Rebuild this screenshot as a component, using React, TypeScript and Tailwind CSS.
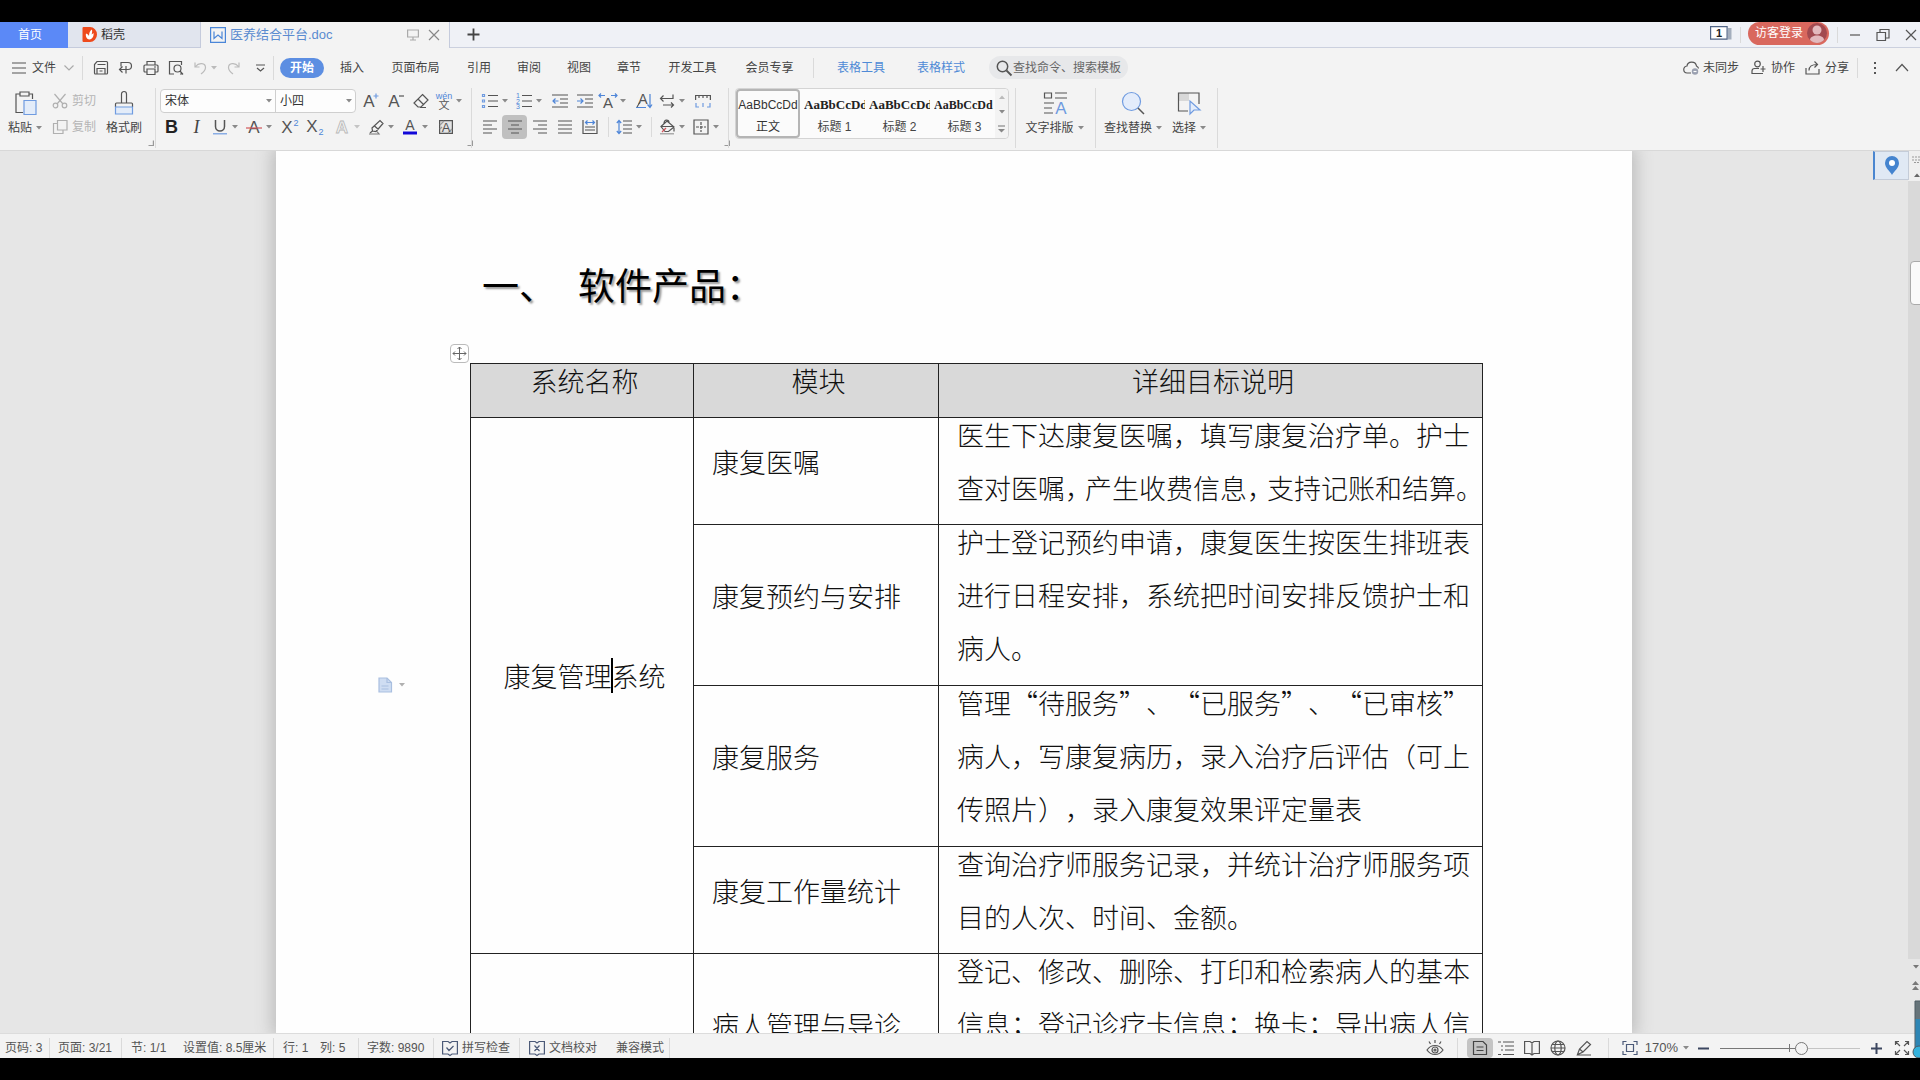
import type { ReactNode } from 'react';

const UI = "font-['Liberation_Sans','Noto_Sans_CJK_SC',sans-serif]";
const CJK = "font-['Noto_Sans_CJK_SC',sans-serif]";

const DARK = '#555';
const BLUE = '#6f9be0';

function Icon({ w = 16, h = 16, color = DARK, className = '', children }: { w?: number; h?: number; color?: string; className?: string; children: ReactNode }) {
  return (
    <svg width={w} height={h} viewBox={`0 0 ${w} ${h}`} fill="none" stroke={color} strokeWidth={1.2} className={`shrink-0 overflow-visible ${className}`} aria-hidden="true">
      {children}
    </svg>
  );
}

function Caret({ color = '#8a8a8a' }: { color?: string }) {
  return (
    <svg width="6" height="4" viewBox="0 0 6 4" className="shrink-0" aria-hidden="true">
      <path d="M0 0h6L3 3.6z" fill={color} />
    </svg>
  );
}

function VLine({ className }: { className: string }) {
  return <span className={`w-px shrink-0 bg-[#dadada] ${className}`} />;
}

function Tool({ label, active = false, children }: { label: string; active?: boolean; children: ReactNode }) {
  return (
    <button aria-label={label} className={`flex h-6 w-[25px] shrink-0 items-center justify-center rounded-sm ${active ? 'bg-[#c0c0c0]' : ''}`}>
      {children}
    </button>
  );
}

function DropTool({ label, caret, children }: { label: string; caret?: string; children: ReactNode }) {
  return (
    <button aria-label={label} className="flex h-6 w-[34px] shrink-0 items-center gap-1 pl-[3px]">
      {children}
      <Caret color={caret} />
    </button>
  );
}

function Launcher() {
  return (
    <button aria-label="更多设置" className="self-end pb-1 pr-1.5">
      <Icon w={6} h={6} color="#999"><path d="M5.4 0.5v5H0.5" /></Icon>
    </button>
  );
}

function Letter({ x = 8, y = 13, size = 15, fill = DARK, stroke = 'none', weight = 400, t = 'A' }: { x?: number; y?: number; size?: number; fill?: string; stroke?: string; weight?: number; t?: string }) {
  return (
    <text x={x} y={y} fontSize={size} fill={fill} stroke={stroke} strokeWidth={stroke === 'none' ? 0 : 0.8} fontWeight={weight} textAnchor="middle" className={UI}>
      {t}
    </text>
  );
}

function TitleBar() {
  return (
    <header className="flex h-[26px] shrink-0 text-xs">
      <button className="w-[68px] bg-[#5b89f7] pr-2 text-white">首页</button>
      <button className="flex w-[133px] items-center gap-1 border-b border-r border-[#c5cbdc] bg-[#e1e5ee] pl-3.5 text-[#333]">
        <Icon w={15} h={15} color="none">
          <path d="M1.5 0H8a7 7.5 0 0 1 0 15H1.500a1 1 0 0 1-1-1V1a1 1 0 0 1 1-1z" fill="#ee4a1c" />
          <path d="M7.500 12.500C4 12 3.500 8.500 4 6.500c1.500.5 2.500 1.500 3 2.500C7 6 8 3.500 10 2.500c.2 2 .3 3-.5 5 1-.5 1.500-1 2-1.500.5 3-1 6-4 6.500z" fill="#fff" />
        </Icon>
        稻壳
      </button>
      <div className="flex w-[249px] items-center border-r border-[#c5cbdc] bg-[#f3f3f3] pl-[9px] pr-[9px] text-[#5a8bd0]">
        <Icon color="#4a86d8">
          <path d="M.6.6h14.800v14.800H.6z" />
          <path d="M4 4.500v7l4-3.500 4 3.500v-7" />
        </Icon>
        <span className="ml-1 text-[13px]">医养结合平台.doc</span>
        <Icon w={12} h={12} color="#aaa" className="ml-auto"><path d="M.6 1h10.800v7H.6zM3 11h6M6 8v3" /></Icon>
        <button aria-label="关闭标签" className="ml-[9px]"><Icon w={12} h={12} color="#888"><path d="M1 1l10 10M11 1L1 11" /></Icon></button>
      </div>
      <div className="flex flex-1 items-center border-b border-[#cbd0de] bg-[#eff1f6] pl-[17px] pr-[3px]">
        <button aria-label="新建标签"><Icon w={13} h={13} color="#444" ><path d="M6.500 0.500v12M.5 6.500h12" strokeWidth={1.800} /></Icon></button>
        <button aria-label="窗口列表" className="mb-1 ml-auto">
          <Icon w={22} h={14} color="#4f6384">
            <path d="M18 2h3.500v11.500H18z" fill="#a4aebd" stroke="none" />
            <path d="M.6.6h16.500v12.600H.6z" fill="#fff" />
            <Letter x={9} y={11} size={11} fill="#222" weight={700} t="1" />
          </Icon>
        </button>
        <VLine className="ml-2 h-4" />
        <button className="mb-[3px] ml-[7px] flex h-[23px] items-center gap-1 rounded-full bg-[#d9685e] pl-[7px] pr-0.5 text-white">
          访客登录
          <Icon w={20} h={20} color="none">
            <circle cx="10" cy="10" r="10" fill="#a24a50" />
            <circle cx="10" cy="7" r="4.500" fill="#e3b9bd" />
            <path d="M3 17c0-6 14-6 14 0-4 4-10 4-14 0z" fill="#e3b9bd" />
          </Icon>
        </button>
        <VLine className="ml-2 h-4" />
        <button aria-label="最小化" className="ml-[11px]"><Icon w={12} h={12}><path d="M1 6h10" /></Icon></button>
        <button aria-label="还原" className="ml-[15px]"><Icon w={14} h={12} color="#555"><path d="M1 3.500h8.500v8H1zM4 3.500v-3h9V9H9.500" /></Icon></button>
        <button aria-label="关闭" className="ml-[15px]"><Icon w={12} h={12}><path d="M1 1l10 10M11 1L1 11" /></Icon></button>
      </div>
    </header>
  );
}

const TABS = [
  { name: '插入', cls: 'w-[50px]' },
  { name: '页面布局', cls: 'w-[77px]' },
  { name: '引用', cls: 'w-[50px]' },
  { name: '审阅', cls: 'w-[50px]' },
  { name: '视图', cls: 'w-[50px]' },
  { name: '章节', cls: 'w-[50px]' },
  { name: '开发工具', cls: 'w-[77px]' },
  { name: '会员专享', cls: 'w-[77px]' },
];

function MenuBar() {
  return (
    <nav className="flex h-[38px] shrink-0 items-center pl-3 pr-[11px] pt-px text-xs text-[#444]">
      <button className="flex items-center">
        <Icon w={14} h={12}><path d="M0 1h14M0 6h14M0 11h14" /></Icon>
        <span className="ml-1.5">文件</span>
        <Icon w={10} h={6} color="#aaa" className="ml-2"><path d="M.5.5L5 5 9.500.5" /></Icon>
      </button>
      <VLine className="ml-2 h-6" />
      <div className="ml-2.5 flex items-center gap-[9px]">
        <button aria-label="保存"><Icon><path d="M1.500 13V4.500l2.500-3h9.500a1 1 0 0 1 1 1V13a1 1 0 0 1-1 1h-11a1 1 0 0 1-1-1zM4 14V8.500h8V14M4.500 4.500h8M6.500 11h3" /></Icon></button>
        <button aria-label="输出为PDF"><Icon><path d="M3 6.500V2.500h7a3.500 3.500 0 0 1 0 7H1.500M4.500 6.500l-3 3 3 3M8 13.500V6" /></Icon></button>
        <button aria-label="打印"><Icon><path d="M4 5V1.500h8V5M4 12H2a1 1 0 0 1-1-1V6a1 1 0 0 1 1-1h12a1 1 0 0 1 1 1v5a1 1 0 0 1-1 1h-2M4 9h8v5.500H4zM11 7h2" /></Icon></button>
        <button aria-label="打印预览"><Icon><path d="M6 14H1.500V1.500h12V5" /><circle cx="9.500" cy="8.500" r="3.500" /><path d="M12 11l3 3.500M12 14h3" /></Icon></button>
      </div>
      <button aria-label="撤销" className="ml-2.5 flex items-center gap-1">
        <Icon w={13} h={14} color="#bbb"><path d="M1 1.500V6h4.500M1.500 5.500C5 1 11.500 2 11.500 6.500c0 3-2.500 5-4.500 6.500" /></Icon>
        <Caret color="#bbb" />
      </button>
      <button aria-label="恢复" className="ml-2.5"><Icon w={13} h={14} color="#bbb"><path d="M12 1.500V6H7.500M11.500 5.500C8 1 1.500 2 1.500 6.500c0 3 2.500 5 4.500 6.500" /></Icon></button>
      <button aria-label="自定义快速访问" className="ml-4"><Icon w={9} h={8}><path d="M0 1h9M1 4l3.500 3L8 4" /></Icon></button>
      <VLine className="ml-2 h-6" />
      <button className="ml-[6px] h-5 w-11 rounded-full bg-[#5c8ee2] font-bold text-white">开始</button>
      <div className="ml-[3px] flex">
        {TABS.map((t) => (
          <button key={t.name} className={t.cls}>{t.name}</button>
        ))}
      </div>
      <VLine className="ml-[5px] h-5" />
      <div className="ml-[7px] flex text-[#4f8ad6]">
        <button className="w-20">表格工具</button>
        <button className="w-20">表格样式</button>
      </div>
      <label className="ml-2 flex h-[23px] w-[139px] items-center rounded-full bg-[#e7e8ea] pl-[7px]">
        <Icon><circle cx="6.500" cy="6.500" r="5.200" strokeWidth={1.500} /><path d="M10.500 10.500l5 5" strokeWidth={1.800} /></Icon>
        <input aria-label="搜索" placeholder="查找命令、搜索模板" className="ml-px w-28 bg-transparent outline-none [text-spacing-trim:space-all] placeholder:text-[#666]" />
      </label>
      <div className="ml-auto flex items-center">
        <button className="flex items-center gap-1"><Icon><path d="M8 13H4.500a3.500 3.500 0 0 1-.5-7c.5-5 8.500-5.500 9.500 0 1.500.8 2 1.500 2 2.500" /><circle cx="12" cy="11.500" r="3.200" fill="#9aa0b0" stroke="none" /><path d="M10.500 11.500h3" stroke="#fff" /></Icon>未同步</button>
        <button className="ml-3 flex items-center gap-[5px]"><Icon w={15} h={15}><circle cx="6.500" cy="4" r="2.800" /><path d="M8 8.500H3.500c-1.500 0-2.500 1-2.500 2.500v2.500h11M12 6v6M9.500 9h5" /></Icon>协作</button>
        <button className="ml-2.5 flex items-center gap-1"><Icon><path d="M1 8v6h13V9M4 10.500C4 6.500 7 4.500 12 4.500M9.500 1.500l3 3-3 3" /></Icon>分享</button>
        <VLine className="ml-2 h-5" />
        <button aria-label="更多" className="ml-[15px]"><Icon w={4} h={14} color="none"><g fill="#555"><path d="M1 1h2v2H1zM1 6h2v2H1zM1 11h2v2H1z" /></g></Icon></button>
        <button aria-label="折叠功能区" className="ml-[18px]"><Icon w={14} h={9}><path d="M1 8l6-6.500L13 8" /></Icon></button>
      </div>
    </nav>
  );
}

const STYLES = [
  { name: '标题 1', cls: 'text-[13px]' },
  { name: '标题 2', cls: 'text-[13px]' },
  { name: '标题 3', cls: 'text-xs' },
];

function Ribbon() {
  return (
    <section className="flex h-[65px] shrink-0 border-b border-[#d8d8d8] text-xs text-[#444]">
      {/* clipboard */}
      <div className="flex w-[154px] pt-[5px]">
        <button className="flex w-[42px] flex-col items-center pl-2">
          <Icon w={23} h={24}>
            <path d="M6 3H2v18.500h7M15 3h3.500v5M6 1h9v4H6z" />
            <path d="M10 9.500h12v14H10z" fill="#e3ecf9" stroke={BLUE} />
          </Icon>
          <span className="mt-[5px] flex items-center gap-1">粘贴<Caret /></span>
        </button>
        <div className="ml-2.5 flex flex-col gap-0.5 text-[#b5b5b5]">
          <button className="-mt-0.5 flex h-6 items-center gap-1"><Icon color="#b0b0b0"><circle cx="3.500" cy="12.500" r="2.300" /><circle cx="12.500" cy="12.500" r="2.300" /><path d="M2.500 1l8.500 10M13.500 1L5 11" /></Icon>剪切</button>
          <button className="flex h-6 items-center gap-1"><Icon color="#b0b0b0"><path d="M5.500 1.500h9.500v9.500H5.500zM5 4.500H1.500v10H11V11.500" /></Icon>复制</button>
        </div>
        <button className="ml-2.5 flex flex-col items-center">
          <Icon w={20} h={24}>
            <path d="M7.500 12V3a2.500 2.500 0 0 1 5 0v9M1.500 16v-3c0-.6.4-1 1-1h15c.6 0 1 .4 1 1v3" />
            <path d="M1.500 16h17v7h-17z" fill="#e3ecf9" stroke={BLUE} />
          </Icon>
          <span className="mt-[5px] whitespace-nowrap">格式刷</span>
        </button>
        <div className="ml-auto flex"><button aria-label="剪贴板设置" className="self-end pb-1"><Icon w={6} h={6} color="#999"><path d="M5.4 0.5v5H0.5" /></Icon></button></div>
      </div>
      <VLine className="my-0.5 ml-px" />

      {/* font */}
      <div className="flex w-[315px]">
        <div className="flex shrink-0 flex-col gap-0.5 pl-[3px] pt-[3px]">
          <div className="flex items-center">
            <div className="ml-px flex h-6 rounded border border-[#cfcfcf] bg-[#fdfdfd] text-[#333]">
              <div className="flex w-[115px] items-center border-r border-[#cfcfcf] pr-[3px]">
                <select aria-label="字体" className="w-full appearance-none bg-transparent pl-1 outline-none"><option>宋体</option></select>
                <Caret />
              </div>
              <div className="flex w-[79px] items-center pr-[3px]">
                <select aria-label="字号" className="w-full appearance-none bg-transparent pl-1 outline-none"><option>小四</option></select>
                <Caret />
              </div>
            </div>
            <div className="ml-0.5 flex">
              <Tool label="增大字号"><Icon><Letter x={6} y={14} size={17} /><path d="M10.500 3h5M13 .5v5" stroke={BLUE} /></Icon></Tool>
              <Tool label="减小字号"><Icon><Letter x={6} y={14} size={17} /><path d="M11 3h5" /></Icon></Tool>
              <Tool label="清除格式"><Icon><path d="M9.500 1.500l5.500 5.500-7 7H5L1 10zM5 6l6 6M7 14.500h6" /></Icon></Tool>
              <DropTool label="拼音指南">
                <Icon><Letter y={6} size={9} fill="#4f86d8" t="wén" /><Letter y={16} size={11} t="文" /></Icon>
              </DropTool>
            </div>
          </div>
          <div className="flex">
            <Tool label="加粗"><span className="text-lg font-bold leading-6 text-[#222]">B</span></Tool>
            <Tool label="倾斜"><span className="font-['Liberation_Serif',serif] text-lg italic leading-6">I</span></Tool>
            <DropTool label="下划线"><Icon><path d="M3.500 1v6.500a4.500 4.500 0 0 0 9 0V1" strokeWidth={1.500} /><path d="M1 14.800h14" stroke={BLUE} /></Icon></DropTool>
            <DropTool label="删除线"><Icon><Letter y={14} size={17} /><path d="M0 9h16" stroke="#d0565c" /></Icon></DropTool>
            <Tool label="上标"><Icon w={18}><Letter x={6} y={14} size={17} t="X" /><Letter x={15} y={7} size={9} fill="#4f86d8" t="2" /></Icon></Tool>
            <Tool label="下标"><Icon w={18}><Letter x={6} y={13} size={17} t="X" /><Letter x={15} y={16} size={9} fill="#4f86d8" t="2" /></Icon></Tool>
            <div className="ml-1 flex">
              <DropTool label="文字效果" caret="#c4c4c4"><Icon><Letter y={14} size={17} fill="#f3f3f3" stroke="#b8b8b8" weight={700} /></Icon></DropTool>
              <DropTool label="突出显示"><Icon><path d="M4 9L12 1.500l3 3L8 12.500 4.500 12zM4 9l.5 3L2 14M6.500 7l4 3.500" /><path d="M1 15h10l-2-2.500" stroke="#777" /></Icon></DropTool>
              <DropTool label="字体颜色"><Icon><Letter y={11} size={14} /><path d="M1 14h14" stroke="#1208d8" strokeWidth={3} /></Icon></DropTool>
              <Tool label="字符底纹"><Icon w={14} h={14}><path d="M.6.6h12.800v12.800H.6z" fill="#e4e4e4" /><path d="M1 5l4-4M9 13l4-4M1 9l2-2" stroke="#999" /><Letter x={7} y={12} size={13} /></Icon></Tool>
            </div>
          </div>
        </div>
        <div className="ml-auto flex"><Launcher /></div>
      </div>
      <VLine className="my-0.5" />

      {/* paragraph */}
      <div className="flex w-64">
        <div className="flex shrink-0 flex-col gap-0.5 pl-[5px] pt-[3px]">
          <div className="flex pl-0.5">
            <DropTool label="项目符号"><Icon><path d="M6 2.500h10M6 8h10M6 13.500h10" /><path d="M.5 1.500h2v2h-2zM.5 7h2v2h-2zM.5 12.500h2v2h-2z" stroke={BLUE} /></Icon></DropTool>
            <DropTool label="编号"><Icon><path d="M6 2.500h10M6 8h10M6 13.500h10" /><Letter x={2} y={5} size={7} fill="#4f86d8" t="1" /><Letter x={2} y={11} size={7} fill="#4f86d8" t="2" /><Letter x={2} y={16} size={7} fill="#4f86d8" t="3" /></Icon></DropTool>
            <Tool label="减少缩进"><Icon><path d="M0 2h16M8 6h8M8 10h8M0 14h16" /><path d="M6.500 8H1M3.500 5.500L1 8l2.500 2.500" stroke="#4f86d8" /></Icon></Tool>
            <Tool label="增加缩进"><Icon><path d="M0 2h16M8 6h8M8 10h8M0 14h16" /><path d="M0 8h6M3.500 5.500L6 8l-2.500 2.500" stroke="#4f86d8" /></Icon></Tool>
            <DropTool label="中文版式"><Icon><Letter y={15} size={15} /><path d="M5 2.500H-1M1 .5l-2 2 2 2M11 2.500h6M15 .5l2 2-2 2" stroke="#4f86d8" /></Icon></DropTool>
            <Tool label="排序"><Icon><Letter x={7} y={11} size={14} /><path d="M0 14.500h10M14 1v13M11.500 11.500L14 14.500l2-3" stroke="#4f86d8" /><path d="M1 14l3-5" /></Icon></Tool>
            <DropTool label="换行"><Icon><path d="M14 1.500v4H1.500M4.500 2.500l-3 3 3 3M4 12h10.500M12 9.500l2.500 2.500L12 14.500" /></Icon></DropTool>
            <Tool label="制表位"><Icon><path d="M.6 7V2.500h14.800V7M4 2.500V5M8 2.500V5M12 2.500V5" /><path d="M1 10v4h3M8 10v4M12 14h3v-4" stroke={BLUE} /></Icon></Tool>
          </div>
          <div className="flex items-center">
            <Tool label="左对齐"><Icon><path d="M1 2h14M1 6h9M1 10h14M1 14h9" /></Icon></Tool>
            <Tool label="居中对齐" active><Icon><path d="M1 2h14M4 6h8M1 10h14M4 14h8" /></Icon></Tool>
            <Tool label="右对齐"><Icon><path d="M1 2h14M6 6h9M1 10h14M6 14h9" /></Icon></Tool>
            <Tool label="两端对齐"><Icon><path d="M1 2h14M1 6h14M1 10h14M1 14h14" /></Icon></Tool>
            <Tool label="分散对齐"><Icon><path d="M1 1v14M15 1v14M3 8h10M3 11h10M1 14.500h14" /><path d="M3.500 3.500h9M5.500 1.500l-2 2 2 2M10.500 1.500l2 2-2 2" stroke="#4f86d8" /></Icon></Tool>
            <VLine className="ml-1.5 h-5" />
            <div className="ml-1 flex">
              <DropTool label="行距"><Icon><path d="M7 2h9M7 6h9M7 10h9M7 14h9" /><path d="M3 1.500v13M.8 4L3 1.500 5.200 4M.8 12L3 14.500 5.200 12" stroke="#4f86d8" /></Icon></DropTool>
            </div>
            <VLine className="ml-1 h-5" />
            <div className="ml-1 flex">
              <DropTool label="底纹颜色"><Icon><path d="M2 7.500L8 2l7 6-5.500 4.500H6zM5 4.500C5 0 10 0 10 3.500M2 7.500h12M15 9v3.500" /><path d="M1 14.800h14" stroke="#999" /><path d="M3 13l4-4" stroke="#d0565c" /></Icon></DropTool>
              <DropTool label="边框"><Icon><path d="M1 1h14v14H1z" /><path d="M8 3v10M3 8h10" strokeDasharray="3 1" /></Icon></DropTool>
            </div>
          </div>
        </div>
        <div className="ml-auto flex"><Launcher /></div>
      </div>
      <VLine className="my-0.5" />

      {/* style gallery */}
      <div className="ml-[6px] mt-0.5 flex h-[51px] w-[274px] rounded border border-[#d4d4d4] bg-[#fbfbfb]">
        <button className="flex w-16 flex-col items-center rounded border-2 border-[#b5b5b5] text-[#333]">
          <span className="mt-1.5 leading-4">AaBbCcDd</span>
          <span className="mt-[6px] leading-4 text-[#333]">正文</span>
        </button>
        {STYLES.map((s) => (
          <button key={s.name} className="ml-[4px] flex w-[61px] flex-col items-center">
            <span className={`mt-2 w-full overflow-hidden whitespace-nowrap text-left font-['Liberation_Serif',serif] font-bold leading-4 text-[#222] ${s.cls}`}>AaBbCcDd</span>
            <span className="mt-[6px] leading-4">{s.name}</span>
          </button>
        ))}
        <div className="ml-auto flex w-[13px] flex-col items-center justify-around rounded-r bg-[#f3f3f3]">
          <button aria-label="上一行" className="rotate-180"><Caret color="#bbb" /></button>
          <button aria-label="下一行"><Caret /></button>
          <button aria-label="展开样式"><Icon w={7} h={8} color="#888"><path d="M0 1h7" /><path d="M0 4h7L3.500 7.500z" fill="#888" stroke="none" /></Icon></button>
        </div>
      </div>
      <VLine className="my-0.5 ml-[6px]" />

      <button className="flex w-[79px] flex-col items-center pr-0.5 pt-[5px]">
        <Icon w={24} h={24}>
          <path d="M1.500 2h7v5h-7zM12 2h12M12 7h12M1 12h10M1 17h8M1 22h9" />
          <Letter x={18} y={23} size={17} fill={BLUE} />
        </Icon>
        <span className="mt-[5px] flex items-center gap-1">文字排版<Caret /></span>
      </button>
      <VLine className="my-0.5" />
      <button className="ml-2 flex flex-col items-center pt-[5px]">
        <Icon w={24} h={24}>
          <circle cx="10.500" cy="10.500" r="9" fill="#e3ecfb" stroke={BLUE} />
          <path d="M17 17l6 6" strokeWidth={1.500} />
        </Icon>
        <span className="mt-[5px] flex items-center gap-1">查找替换<Caret /></span>
      </button>
      <button className="ml-2.5 flex flex-col items-center pt-[5px]">
        <Icon w={24} h={24}>
          <path d="M1.500 2H12v8H1.500z" fill="#d8d8d8" stroke="none" />
          <path d="M11 20H1.500V2H22v11" />
          <path d="M13 10v13l4-4h6z" fill="#e3ecfb" stroke={BLUE} />
        </Icon>
        <span className="mt-[5px] flex items-center gap-1">选择<Caret /></span>
      </button>
      <VLine className="my-0.5 ml-[11px]" />
    </section>
  );
}

const NarrowComma = () => <span className="inline-block w-5 [font-feature-settings:'halt']">，</span>;

type Row = { module: string; lines: ReactNode[]; height: string; group?: { span: number; content: ReactNode } };

const ROWS: Row[] = [
  {
    module: '康复医嘱',
    height: 'h-[107px]',
    lines: ['医生下达康复医嘱，填写康复治疗单。护士', <>查对医嘱<NarrowComma />产生收费信息<NarrowComma />支持记账和结算。</>],
    group: {
      span: 4,
      content: (
        <>
          康复管理
          <span className="relative"><span className="absolute -left-px top-0.5 h-[35px] w-0.5 bg-black" /></span>
          系统
        </>
      ),
    },
  },
  { module: '康复预约与安排', height: 'h-[161px]', lines: ['护士登记预约申请，康复医生按医生排班表', '进行日程安排，系统把时间安排反馈护士和', '病人。'] },
  { module: '康复服务', height: 'h-[161px]', lines: ['管理“待服务”、“已服务”、“已审核”', '病人，写康复病历，录入治疗后评估（可上', '传照片），录入康复效果评定量表'] },
  { module: '康复工作量统计', height: 'h-[107px]', lines: ['查询治疗师服务记录，并统计治疗师服务项', '目的人次、时间、金额。'] },
  {
    module: '病人管理与导诊',
    height: 'h-[161px]',
    lines: ['登记、修改、删除、打印和检索病人的基本', '信息；登记诊疗卡信息；换卡；导出病人信', '息。'],
    group: { span: 1, content: '' },
  },
];

function DocumentPage() {
  return (
    <article className={`relative w-[1356px] shrink-0 bg-[#fefefe] pl-[194px] pr-[149px] pt-[106px] text-[#111] shadow-[0_0_16px_4px_#bdbdbd] [text-spacing-trim:space-all] ${CJK}`}>
      <h1 className="flex gap-[22px] pl-3 text-[37px] font-normal leading-[54px] text-black [text-shadow:2px_2px_2px_#999]">
        <span>一、</span>
        <span>软件产品：</span>
      </h1>
      <div className="relative mt-[52px]">
        <button aria-label="移动表格" className="absolute -left-5 -top-[19px] flex size-[19px] items-center justify-center rounded-sm border border-[#bbb] bg-white">
          <Icon w={15} h={15} color="#666"><path d="M7.500 1v13M1 7.500h13M5.500 3l2-2 2 2M5.500 12l2 2 2-2M3 5.500l-2 2 2 2M12 5.500l2 2-2 2" strokeWidth={1} /></Icon>
        </button>
        <table className="w-full table-fixed border-collapse border border-[#222] text-[27px] font-light leading-[34px]">
          <thead>
            <tr className="h-[54px] bg-[#d9d9d9]">
              <th className="w-[223px] border border-[#222] pb-[19px] pl-[5px] font-light">系统名称</th>
              <th className="w-[245px] border border-[#222] pb-[19px] pl-[5px] font-light">模块</th>
              <th className="border border-[#222] pb-[19px] pl-[5px] font-light">详细目标说明</th>
            </tr>
          </thead>
          <tbody>
            {ROWS.map((r) => (
              <tr key={r.module} className={r.height}>
                {r.group && (
                  <td rowSpan={r.group.span} className="border border-[#222] pb-[19px] pl-[5px] text-center">{r.group.content}</td>
                )}
                <td className="border border-[#222] pb-[19px] pl-[18px]">{r.module}</td>
                <td className="border border-[#222] pl-[18px] align-top">
                  {r.lines.map((l, i) => (
                    <p key={i} className="whitespace-nowrap pb-[19px]">{l}</p>
                  ))}
                </td>
              </tr>
            ))}
          </tbody>
        </table>
      </div>
      <button aria-label="段落选项" className="absolute left-[102px] top-[526px] flex items-center gap-1.5">
        <Icon w={15} h={16} color="#a9bfe0"><path d="M1 1h8l4.500 4.500V15H1z" fill="#cfddf2" /><path d="M9 1v4.500h4.500M3.500 9h7M3.500 12h7" /></Icon>
        <Caret color="#b0b0b0" />
      </button>
    </article>
  );
}

function Workspace() {
  return (
    <main className="relative flex min-h-0 flex-1 bg-[#e6e6e6]">
      <div className="flex min-w-0 flex-1 justify-center overflow-hidden">
        <DocumentPage />
      </div>
      <button aria-label="定位" className="absolute right-[11px] top-0 flex h-[29px] w-9 items-center justify-center border border-l-2 border-[#c4ccd8] border-l-[#4a86d0] bg-[#e0e9f4]">
        <Icon w={14} h={19} color="none"><path d="M7 0a7 7 0 0 1 7 7c0 5-5 8-7 12C5 15 0 12 0 7a7 7 0 0 1 7-7z" fill="#4484cf" /><circle cx="7" cy="7" r="3" fill="#fff" /></Icon>
      </button>
      <aside className="flex w-3 shrink-0 flex-col overflow-hidden">
        <div className="flex h-[30px] flex-col items-end justify-around bg-[#efefef]">
          <Icon w={8} h={8} color="#999"><path d="M0 1h8M0 4h8M2 6.500h6" strokeDasharray="2 1" /></Icon>
          <span className="rotate-180"><Caret color="#666" /></span>
        </div>
        <div className="flex-1 bg-[#d9d9d9] pl-0.5 pt-20">
          <div className="h-11 w-4 rounded border border-[#aaa] bg-[#fafafa]" />
        </div>
        <div className="flex h-[74px] flex-col items-end gap-3 pr-px pt-1.5">
          <Caret color="#777" />
          <Icon w={7} h={9} color="none"><path d="M0 4l3.500-4L7 4zM0 9l3.500-4L7 9z" fill="#777" /></Icon>
        </div>
      </aside>
    </main>
  );
}

function StatusBar() {
  return (
    <footer className="relative flex h-[25px] shrink-0 items-center border-t border-[#dcdcdc] bg-[#f3f3f3] pl-[5px] pr-[10px] pt-1 text-xs text-[#555]">
      <span className="w-11">页码: 3</span>
      <VLine className="h-5" />
      <span className="w-[71px] pl-2">页面: 3/21</span>
      <VLine className="h-5" />
      <span className="w-[61px] pl-[9px]">节: 1/1</span>
      <span className="w-[90px] whitespace-nowrap">设置值: 8.5厘米</span>
      <VLine className="h-5" />
      <span className="w-[46px] pl-[9px]">行: 1</span>
      <span className="w-[38px]">列: 5</span>
      <VLine className="h-5" />
      <span className="w-[74px] pl-2">字数: 9890</span>
      <VLine className="h-5" />
      <button className="flex w-[85px] items-center gap-1 pl-2">
        <Icon color="#4c5a78"><path d="M.6 1.500h5.500L8 3l2-1.500h5.400v12.500H10l-2 1.500-2-1.500H.6zM4.500 7.500l2.500 3L11.500 6" /></Icon>拼写检查
      </button>
      <VLine className="h-5" />
      <button className="flex w-24 items-center gap-1 pl-[9px]">
        <Icon color="#4c5a78"><path d="M.6 1.500h5.500L8 3l2-1.500h5.400v12.500H10l-2 1.500-2-1.500H.6zM5.500 5.500l5 5.500M10.500 5.500l-5 5.500" /></Icon>文档校对
      </button>
      <span className="w-[53px]">兼容模式</span>
      <VLine className="h-5" />

      <div className="ml-auto flex items-center">
        <button aria-label="护眼模式"><Icon w={18} h={16}><path d="M1 10c4-6 12-6 16 0-4 6-12 6-16 0z" /><circle cx="9" cy="10" r="3" /><circle cx="9" cy="10" r="1" /><path d="M9 0v3M3 1.500l1.500 2.500M15 1.500L13.500 4" /></Icon></button>
        <VLine className="ml-[13px] h-5" />
        <div className="ml-[9px] flex">
          <button aria-label="页面视图" className="flex h-5 w-[26px] items-center justify-center rounded-sm bg-[#c4c4c4]"><Icon color="#444"><path d="M1.500 1.500h9.500l3.500 3.500v9.500h-13zM4.500 7h7M4.500 10.500h7" /></Icon></button>
          <button aria-label="大纲" className="flex w-[26px] items-center justify-center"><Icon><path d="M0 2h3M5 2h11M3 6h2M7 6h9M3 10h2M7 10h9M0 14.500h3M5 14.500h11" /></Icon></button>
          <button aria-label="阅读版式" className="flex w-[26px] items-center justify-center"><Icon><path d="M.6 1.500H6L8 3l2-1.500h5.400v12H10L8 15l-2-1.500H.6zM8 3v12" /></Icon></button>
          <button aria-label="Web版式" className="flex w-[26px] items-center justify-center"><Icon><circle cx="8" cy="8" r="7" /><ellipse cx="8" cy="8" rx="3.200" ry="7" /><path d="M1 8h14M2 4.500h12M2 11.500h12" /></Icon></button>
          <button aria-label="写作模式" className="flex w-[26px] items-center justify-center"><Icon><path d="M1.500 14.500L3.500 9 11 1.500l3.500 3L7 12zM3.500 9L7 12M1 15h14" /></Icon></button>
        </div>
        <VLine className="ml-[11px] h-5" />
        <button aria-label="适应页面" className="ml-[13px]"><Icon color="#4c5a78"><path d="M1 5V1.500h3.500M11.500 1.500H15V5M15 11v3.500h-3.500M4.500 14.500H1V11M4.500 4.500h7v7h-7z" /></Icon></button>
        <button className="ml-[7px] flex items-center gap-[5px] text-[13px]">170%<Caret /></button>
        <button aria-label="缩小" className="ml-[9px]"><Icon w={11} h={11} color="#3c4760"><path d="M0 5.500h11" strokeWidth={2} /></Icon></button>
        <div className="relative ml-[11px] flex items-center">
          <input
            type="range"
            aria-label="缩放"
            min={0}
            max={100}
            defaultValue={59}
            className="h-4 w-[140px] appearance-none bg-transparent [&::-webkit-slider-runnable-track]:h-px [&::-webkit-slider-runnable-track]:bg-linear-to-r [&::-webkit-slider-runnable-track]:from-[#777] [&::-webkit-slider-runnable-track]:from-60% [&::-webkit-slider-runnable-track]:to-[#c4c4c4] [&::-webkit-slider-runnable-track]:to-60% [&::-webkit-slider-thumb]:-mt-1.5 [&::-webkit-slider-thumb]:size-[13px] [&::-webkit-slider-thumb]:appearance-none [&::-webkit-slider-thumb]:rounded-full [&::-webkit-slider-thumb]:border [&::-webkit-slider-thumb]:border-[#777] [&::-webkit-slider-thumb]:bg-[#f3f3f3]"
          />
          <span className="absolute left-[69px] top-1 h-2 w-px bg-[#777]" />
        </div>
        <button aria-label="放大" className="ml-[11px]"><Icon w={11} h={11} color="#3c4760"><path d="M0 5.500h11M5.500 0v11" strokeWidth={2} /></Icon></button>
        <button aria-label="全屏" className="ml-3"><Icon><path d="M6 6L1.500 1.500M1.500 5V1.500H5M10 6l4.500-4.500M11 1.500h3.500V5M6 10l-4.500 4.500M1.500 11v3.500H5M10 10l4.500 4.500M11 14.500h3.500V11" /></Icon></button>
      </div>
      <svg width="8" height="58" viewBox="0 0 8 58" fill="none" stroke="#4d5b63" className="absolute bottom-0 right-0" aria-hidden="true">
        <path d="M3 1h6v52H3z" fill="#66747a" />
        <path d="M3.500 19H8v32H3.500z" fill="#2e86b5" stroke="none" />
        <circle cx="7" cy="52" r="6" fill="#35b2dc" />
      </svg>
    </footer>
  );
}

export default function App() {
  return (
    <div className={`flex h-screen flex-col overflow-hidden bg-black py-[22px] ${UI}`}>
      <div className="flex min-h-0 flex-1 flex-col bg-[#f3f3f3]">
        <TitleBar />
        <MenuBar />
        <Ribbon />
        <Workspace />
        <StatusBar />
      </div>
    </div>
  );
}
